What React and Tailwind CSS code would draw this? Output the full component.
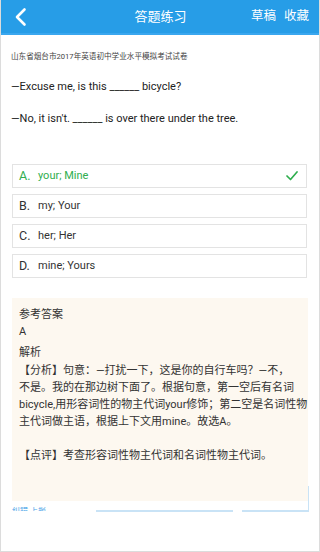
export default function App() {
  const options = [
    { l: "A.", t: "your; Mine", ok: true },
    { l: "B.", t: "my; Your" },
    { l: "C.", t: "her; Her" },
    { l: "D.", t: "mine; Yours" },
  ];
  return (
    <div className="w-[320px] h-[552px] overflow-hidden bg-white border-x border-b border-[#dcdcdc] flex flex-col" style={{ fontFamily: "Roboto, 'Noto Sans CJK SC', sans-serif" }}>
      <div className="h-[35px] bg-[#279de7] border-b-[2px] border-[#3aa7ef] flex items-center pl-[13px] pr-[10px] text-white shrink-0">
        <svg width="14" height="20" viewBox="0 0 14 20" fill="none" stroke="white" strokeWidth="2.6" strokeLinecap="round" strokeLinejoin="round">
          <path d="M10.5 2.5 L3 10 L10.5 17.5" />
        </svg>
        <div className="flex-1 text-center text-[13px] pl-[42px]">答题练习</div>
        <div className="text-[12.5px] flex gap-[8px]">
          <span>草稿</span>
          <span>收藏</span>
        </div>
      </div>
      <div className="px-[10px] pt-[16px] text-[#333]">
        <div className="text-[7.6px] leading-[12px] text-[#444]">山东省烟台市2017年英语初中学业水平模拟考试试卷</div>
        <div className="text-[11px] leading-[16px] mt-[16px] text-[#222]">—Excuse me, is this ______ bicycle?</div>
        <div className="text-[11px] leading-[16px] mt-[16px] text-[#222]">—No, it isn't. ______ is over there under the tree.</div>
      </div>
      <div className="pl-[11px] pr-[12px] mt-[37px] flex flex-col gap-[6px]">
        {options.map((o) => (
          <div key={o.l} className={`h-[24px] border-[1.5px] border-[#e3e3e3] flex items-center pl-[6px] pr-[7px] ${o.ok ? "text-[#2fae4e]" : "text-[#333]"}`}>
            <span className="w-[19px] text-[12.5px]">{o.l}</span>
            <span className="text-[11px] flex-1">{o.t}</span>
            {o.ok && (
              <svg width="12" height="10" viewBox="0 0 12 10" fill="none" stroke="#2fae4e" strokeWidth="1.7" strokeLinecap="round" strokeLinejoin="round" className="mr-[1px]">
                <path d="M1 5 L4.5 8.5 L11 1" />
              </svg>
            )}
          </div>
        ))}
      </div>
      <div className="relative z-10 ml-[11px] mr-[11px] mt-[20px] h-[203px] bg-[#fdf8f0] pl-[7px] pr-[2px] pt-[8px] text-[#333] text-[11px] leading-[17px]">
        <div>参考答案</div>
        <div>A</div>
        <div className="mt-[4px]">解析</div>
        <div className="mt-[1px] whitespace-nowrap">
          <div>【分析】句意：—打扰一下，这是你的自行车吗？—不，</div>
          <div>不是。我的在那边树下面了。根据句意，第一空后有名词</div>
          <div>bicycle,用形容词性的物主代词your修饰；第二空是名词性物</div>
          <div>主代词做主语，根据上下文用mine。故选A。</div>
        </div>
        <div className="mt-[17px]">【点评】考查形容词性物主代词和名词性物主代词。</div>
      </div>
      <div className="relative flex items-start ml-[11px] mr-[10px] mt-[6px] h-[5px]">
        <div className="h-[4px] overflow-hidden w-[84px]">
          <div className="text-[8px] leading-[8px] text-[#4aa5e8]">纠错 上报</div>
        </div>
        <div className="mt-[3px] h-[1.5px] w-[137px] bg-[#c9e3f6]"></div>
        <div className="ml-[9px] mt-[3px] h-[1.5px] flex-1 bg-[#c9e3f6]"></div>
        <div className="absolute right-0 bottom-[0.5px] w-[1.5px] h-[26px] bg-[#c9e3f6]"></div>
      </div>
    </div>
  );
}
